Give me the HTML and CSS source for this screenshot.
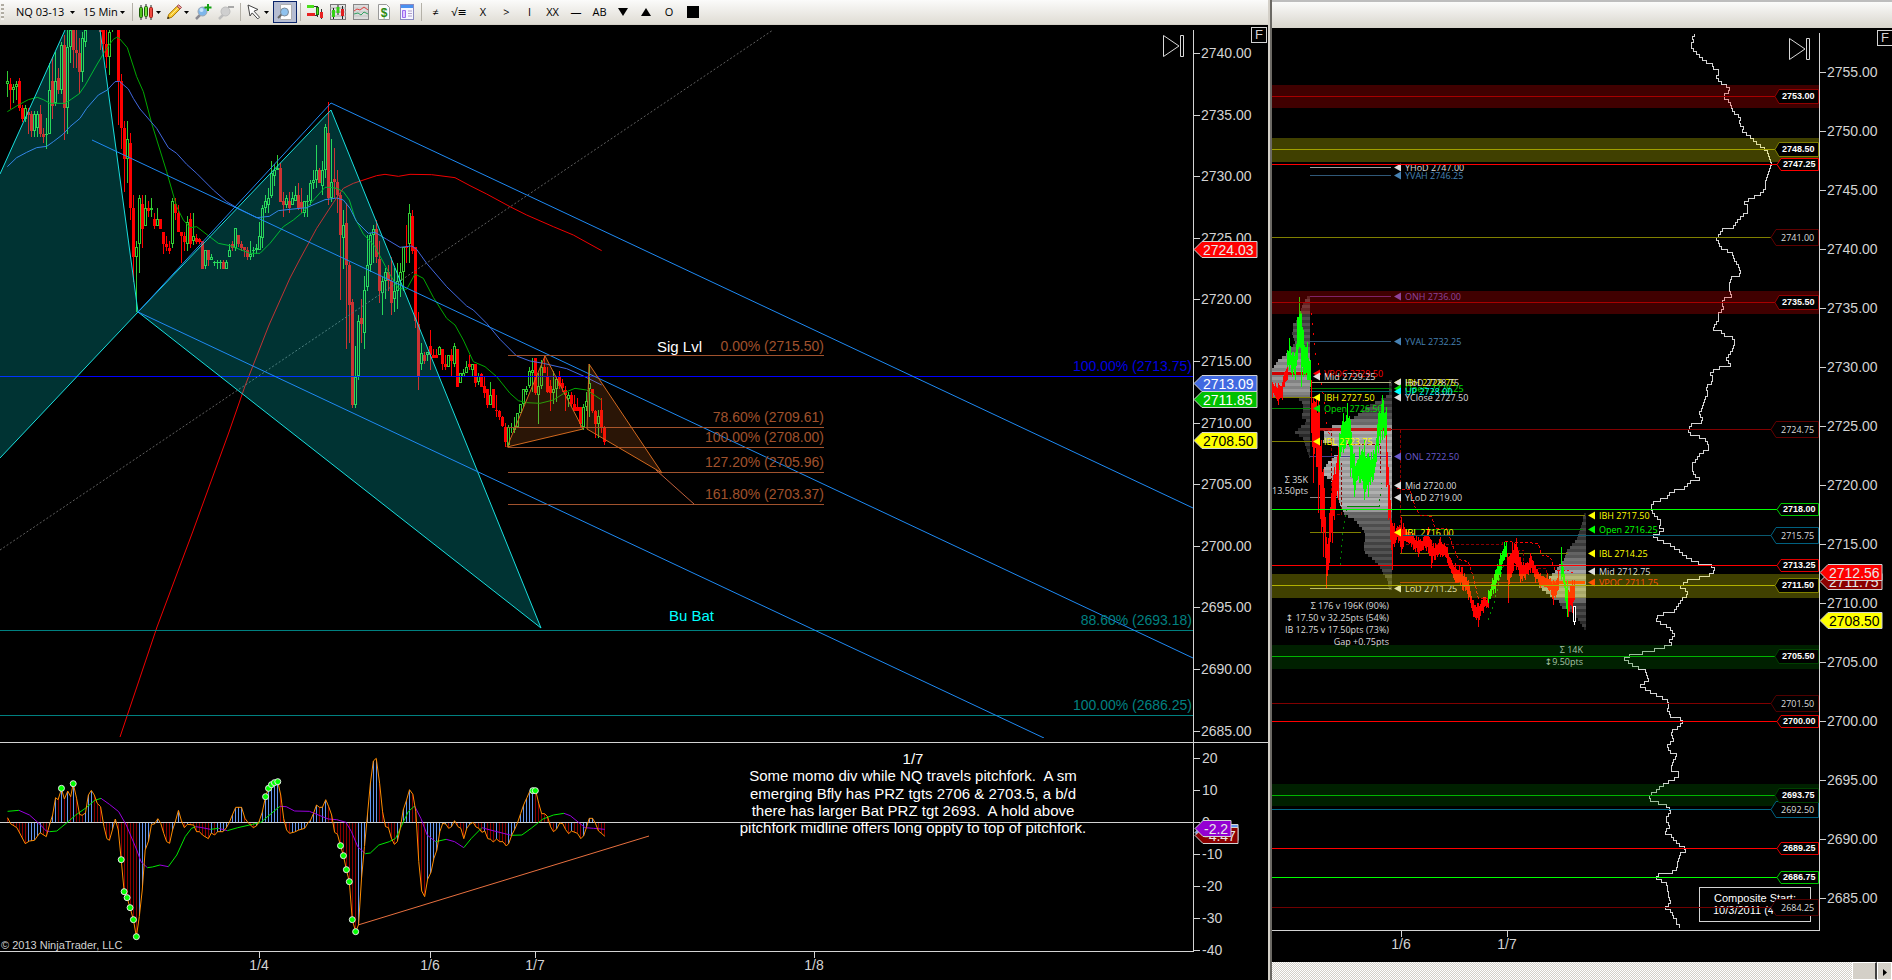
FILE: index.html
```html
<!DOCTYPE html>
<html lang="en">
<head>
<meta charset="utf-8">
<title>NQ 03-13 - 15 Min</title>
<link rel="stylesheet" href="styles.css">
</head>
<body>
<main class="workspace">
  <section class="window" aria-label="NQ 15 minute chart">
    <div class="toolbar" role="toolbar" aria-label="Chart tools">
      <span class="grip"></span>
      <label class="combo combo-instrument"><select aria-label="Instrument"><option>NQ 03-13</option></select><svg class="caret" viewBox="0 0 5 3"><path d="M0 0h5L2.500 3z"/></svg></label>
      <label class="combo combo-period"><select aria-label="Period"><option>15 Min</option></select><svg class="caret" viewBox="0 0 5 3"><path d="M0 0h5L2.500 3z"/></svg></label>
      <span class="sep"></span>
      <button class="tool tool-menu" aria-label="Chart style">
        <svg class="icon" viewBox="0 0 16 16"><path d="M3 1v15M8 0v15M13 1v15" stroke="#222"/><rect x="1.500" y="3.500" width="3" height="10" rx="1" fill="#4ec21a" stroke="#1d5c0a"/><rect x="6.500" y="2.500" width="3" height="10" rx="1" fill="#6fe03a" stroke="#1d5c0a"/><rect x="11.500" y="3.500" width="3" height="10" rx="1" fill="#f04a40" stroke="#a01a14"/></svg>
        <svg class="caret" viewBox="0 0 5 3"><path d="M0 0h5L2.500 3z"/></svg>
      </button>
      <button class="tool tool-menu" aria-label="Drawing tools">
        <svg class="icon" viewBox="0 0 16 16"><path d="M1.500 14.500l1.200-4L11 2.200l3 2.800-8.200 8.300z" fill="#f8c830" stroke="#a87808"/><path d="M11 2.200L12.600.8l3 2.600L14 5z" fill="#f0a0a0" stroke="#a05050"/><path d="M1.200 15l.8-2.500 1.600 1.700z" fill="#222"/><path d="M4.500 11.500L12 4" stroke="#fff08a"/></svg>
        <svg class="caret" viewBox="0 0 5 3"><path d="M0 0h5L2.500 3z"/></svg>
      </button>
      <button class="tool" aria-label="Zoom in">
        <svg class="icon" viewBox="0 0 16 16"><path d="M1 15l4.500-4.500" stroke="#8b8b93" stroke-width="2.500"/><circle cx="7.500" cy="7.500" r="4.500" fill="#7db6ea" stroke="#9aa6b2"/><circle cx="6.500" cy="6" r="2" fill="#c8e4fa"/><path d="M13 0v7M9.500 3.500h7" stroke="#12a012" stroke-width="2"/></svg>
      </button>
      <button class="tool" aria-label="Zoom out" disabled>
        <svg class="icon" viewBox="0 0 16 16"><path d="M1 15l4.500-4.500" stroke="#bdbdbd" stroke-width="2.500"/><circle cx="7.500" cy="7.500" r="4.500" fill="#cfcfcf" stroke="#bdbdbd"/><path d="M10 3h6" stroke="#a8a8a8" stroke-width="2"/></svg>
      </button>
      <span class="sep"></span>
      <button class="tool tool-menu" aria-label="Cursor">
        <svg class="icon" viewBox="0 0 16 16"><path d="M2 1l10 4.500-4 1.700 5.500 6-1.700 1.700-5.600-6L4 12z" fill="#fff" stroke="#444"/></svg>
        <svg class="caret" viewBox="0 0 5 3"><path d="M0 0h5L2.500 3z"/></svg>
      </button>
      <button class="tool tool-active" aria-label="Data box" aria-pressed="true">
        <svg class="icon" viewBox="0 0 16 16"><path d="M3.500.5h11v15h-11z" fill="#fdfdfd" stroke="#b0b0b0"/><path d="M1 14l4-4" stroke="#666" stroke-width="2"/><circle cx="7.500" cy="8" r="4" fill="#8fc2ee" stroke="#7f8c98"/></svg>
      </button>
      <span class="sep"></span>
      <button class="tool" aria-label="Chart trader">
        <svg class="icon" viewBox="0 0 16 16"><path d="M6 2.500h4M7 11.500h3M10.500 2v11M14.500 5v10" stroke="#333"/><rect x="0" y="1" width="7" height="3" fill="#4be01a"/><rect x="9.500" y="3.500" width="2" height="7" fill="#4be01a" stroke="#1d7c0a"/><rect x="0" y="9" width="8" height="3" fill="#e82020"/><rect x="13" y="8" width="3" height="6" fill="#e82020"/></svg>
      </button>
      <button class="tool" aria-label="Data series">
        <svg class="icon" viewBox="0 0 16 16"><rect x=".5" y=".5" width="15" height="15" fill="#e4e4e4" stroke="#777"/><path d="M0 4h16M0 8h16M0 12h16" stroke="#aaa"/><path d="M3.500 4v11M8 1v10M12.500 2v13" stroke="#222"/><path d="M2 6h3v7H2zM6.500 3h3v6h-3z" fill="#35d015"/><path d="M11 5h3v7h-3z" fill="#e02020"/></svg>
      </button>
      <button class="tool" aria-label="Indicators">
        <svg class="icon" viewBox="0 0 16 16"><rect x=".5" y=".5" width="15" height="15" fill="#dcdcdc" stroke="#888"/><path d="M1 4h14M1 8h14M1 12h14" stroke="#c4c4c4"/><path d="M1 7l3-2 3 1 4-3 4 3" fill="none" stroke="#e04040"/><path d="M1 10l4-1 3 2 3-3 4 2" fill="none" stroke="#30a060"/></svg>
      </button>
      <button class="tool" aria-label="Strategies">
        <svg class="icon" viewBox="0 0 16 16"><path d="M2.500.5h8l3 3v12h-11z" fill="#fbfbfb" stroke="#999"/><text class="dollar" x="8" y="13" text-anchor="middle">$</text></svg>
      </button>
      <button class="tool" aria-label="Properties">
        <svg class="icon" viewBox="0 0 16 16"><rect x="1.500" y=".5" width="13" height="15" fill="#f6f6ff" stroke="#8a8ac0"/><path d="M2 1h12v3H2z" fill="#4a90f0"/><path d="M3.500 6.500h3v7h-3z" fill="#e0c8ff" stroke="#9a6af0"/><path d="M9 7h4M9 9.500h4M9 12h4" stroke="#b0a0c8"/></svg>
      </button>
      <span class="sep"></span>
      <button class="tool text-tool">≠</button>
      <button class="tool text-tool wide">√≡</button>
      <button class="tool text-tool wide">X</button>
      <button class="tool text-tool">&gt;</button>
      <button class="tool text-tool">I</button>
      <button class="tool text-tool">XX</button>
      <button class="tool text-tool wide">—</button>
      <button class="tool text-tool">AB</button>
      <button class="tool text-tool" aria-label="Triangle down"><svg class="shape" viewBox="0 0 10 10"><path d="M0 1h10L5 9z"/></svg></button>
      <button class="tool text-tool" aria-label="Triangle up"><svg class="shape" viewBox="0 0 10 10"><path d="M0 9h10L5 1z"/></svg></button>
      <button class="tool text-tool wide">O</button>
      <button class="tool text-tool" aria-label="Square"><svg class="shape square" viewBox="0 0 12 12"><path d="M0 0h12v12H0z"/></svg></button>
    </div>
    <div class="chart-area">
      <svg class="chart" id="main-chart" viewBox="0 25 1268 955" preserveAspectRatio="xMinYMin meet"></svg>
      <button class="forward" aria-label="Go to last bar"><svg viewBox="0 0 21 22"><path d="M.5.5v21L16 11zM17.500.5h3v21h-3z" fill="none" stroke="#d8d8d8"/></svg></button>
      <button class="fixed-scale">F</button>
    </div>
  </section>
  <div class="divider"></div>
  <section class="window" aria-label="NQ composite profile chart">
    <div class="toolbar-empty"></div>
    <div class="chart-area">
      <svg class="chart" id="profile-chart" viewBox="1272 28 620 934" preserveAspectRatio="xMinYMin meet"></svg>
      <button class="forward forward-profile" aria-label="Go to last bar"><svg viewBox="0 0 21 22"><path d="M.5.5v21L16 11zM17.500.5h3v21h-3z" fill="none" stroke="#d8d8d8"/></svg></button>
      <button class="fixed-scale fixed-scale-profile">F</button>
    </div>
    <div class="scrollbar">
      <span class="track"></span>
      <span class="thumb"></span>
      <button class="scroll-button" aria-label="Scroll right"><svg viewBox="0 0 4 7"><path d="M0 0v7L4 3.500z"/></svg></button>
    </div>
  </section>
</main>
<script src="chart.js"></script>
</body>
</html>
```

FILE: styles.css
```css
* { box-sizing: border-box; }

html, body { height: 100%; }

body {
  margin: 0;
  background: #000;
  color: #d3d3d3;
  font-family: "Liberation Sans", Arial, sans-serif;
  overflow: hidden;
}

.workspace {
  display: grid;
  grid-template-columns: 1268fr 4px 620fr;
  height: 100vh;
}

.window {
  display: flex;
  flex-direction: column;
  min-width: 0;
  min-height: 0;
  overflow: hidden;
}

.divider {
  background: #d4d0c8;
  border-right: 2px solid #6b6964;
}

.toolbar {
  display: flex;
  align-items: center;
  flex: none;
  height: 25px;
  background: linear-gradient(#fbfbfa, #dfdcd4);
  border-bottom: 1px solid #d4d0c8;
}

.toolbar-empty {
  flex: none;
  height: 28px;
  border-top: 2px solid #bdbdbd;
  background: linear-gradient(#fbfbfa, #d8d5cc);
}

.grip {
  width: 3px;
  height: 16px;
  margin: 0 8px 0 1px;
  background: repeating-linear-gradient(#b0aca2 0 2px, #f4f3f0 2px 4px);
}

.sep {
  width: 1px;
  height: 18px;
  margin: 0 2px 0 3px;
  background: #b4b1a8;
}

.combo {
  display: flex;
  align-items: center;
  padding-left: 4px;
}

.combo-instrument { width: 67px; }
.combo-period { width: 50px; }

.combo select {
  flex: 1;
  min-width: 0;
  padding: 0;
  border: 0;
  appearance: none;
  background: none;
  color: #000;
  font: 11px/16px "Open Sans", sans-serif;
}

.caret { width: 5px; height: 3px; margin-right: 4px; flex: none; }

.tool {
  display: flex;
  align-items: center;
  justify-content: center;
  flex: none;
  width: 23px;
  height: 22px;
  padding: 0;
  border: 0;
  background: none;
  color: #000;
  font: 11px/16px "Open Sans", "DejaVu Sans", sans-serif;
}

.tool-menu { width: 28px; gap: 2px; }
.tool-menu .caret { margin: 0; }

.tool-active {
  width: 24px;
  margin: 0 0 0 2px;
  border: 1px solid #0a246a;
  background: #b6bdd2;
}

.wide { width: 24px; }
.icon { width: 16px; height: 16px; flex: none; fill: none; overflow: visible; }
.dollar { fill: #2a8a10; font: bold 12px "Liberation Sans", sans-serif; }
.shape { width: 10px; height: 10px; }
.square { width: 12px; height: 12px; }

.chart-area { position: relative; flex: 1; min-height: 0; }
.chart { display: block; width: 100%; height: 100%; }

.fixed-scale {
  position: absolute;
  top: 2px;
  right: 1px;
  width: 16px;
  height: 16px;
  padding: 0;
  border: 1px solid #d3d3d3;
  background: #000;
  color: #d3d3d3;
  font: 13px/14px "Liberation Sans", Arial, sans-serif;
}

.fixed-scale-profile { right: -1px; }

.forward {
  position: absolute;
  top: 10px;
  right: 84px;
  width: 21px;
  height: 22px;
  padding: 0;
  border: 0;
  background: none;
}

.forward svg { display: block; width: 21px; height: 22px; }
.forward-profile { right: 82px; }

.scrollbar { display: flex; flex: none; height: 18px; }

.track {
  flex: 1;
  background: repeating-conic-gradient(#d4d0c8 0 25%, #fff 0 50%) 0 0 / 2px 2px;
}

.thumb {
  width: 25px;
  background: #d4d0c8;
  border: 1px solid #fff;
  border-right: 2px solid #404040;
}

.scroll-button {
  width: 15px;
  padding: 0;
  border: 1px solid #fff;
  background: #d4d0c8;
}

.scroll-button svg { width: 4px; height: 7px; }

svg .crisp { shape-rendering: crispEdges; }
svg .smooth { shape-rendering: auto; }
svg text { white-space: pre; }

.axis-text { font: 14px "Liberation Sans", Arial, sans-serif; fill: #d3d3d3; }
.note-text { font: 15px "Liberation Sans", Arial, sans-serif; fill: #fff; }
.copyright { font: 11px "Liberation Sans", Arial, sans-serif; fill: #d3d3d3; }
.small-text { font: 9px "Open Sans", "Noto Sans", "DejaVu Sans", sans-serif; }
.tag-text { font: 9px "Open Sans", "Noto Sans", sans-serif; fill: #dcdcdc; }
.tag-strong { font: bold 9px "Liberation Sans", Arial, sans-serif; fill: #fff; }
.box-text { font: 11px "Liberation Sans", Arial, sans-serif; fill: #fff; }
```

FILE: chart.js
```js
const NS = 'http://www.w3.org/2000/svg';

function add(parent, name, attrs, text) {
  const el = document.createElementNS(NS, name);
  for (const key in attrs) el.setAttribute(key, attrs[key]);
  if (text !== undefined) el.textContent = text;
  parent.appendChild(el);
  return el;
}

function line(g, x1, y1, x2, y2, stroke, extra) {
  return add(g, 'line', Object.assign({ x1, y1, x2, y2, stroke }, extra));
}

function poly(g, pts, stroke, extra) {
  return add(g, 'polyline', Object.assign({ points: pts.map(p => p.join(',')).join(' '), stroke, fill: 'none' }, extra));
}

function label(g, x, y, text, fill, cls, anchor) {
  const attrs = { x, y, class: cls || 'axis-text', 'text-anchor': anchor || 'start' };
  if (fill) attrs.style = 'fill:' + fill;
  return add(g, 'text', attrs, text);
}

function pairs(s) {
  return s.trim().split(/\s+/).map(p => p.split(',').map(Number));
}

function scaled(s, ox, oy, kx, ky) {
  return pairs(s).map(p => [ox + p[0] / kx, oy + p[1] / (ky || kx)]);
}

function valueAt(pts, x) {
  for (let i = 1; i < pts.length; i++) {
    if (x <= pts[i][0]) {
      const a = pts[i - 1], b = pts[i];
      const t = (x - a[0]) / (b[0] - a[0] || 1);
      return a.slice(1).map((v, k) => v + t * (b[k + 1] - v));
    }
  }
  return pts[pts.length - 1].slice(1);
}

function priceTag(g, x, y, width, text, fill, color) {
  const t = y - 8, b = y + 8;
  add(g, 'path', { d: `M${x} ${y}L${x + 8} ${t}H${x + width}V${b}H${x + 8}Z`, fill, stroke: '#d3d3d3' });
  if (text) label(g, x + 9, y + 5, text, color || '#e8e8e8');
}

const SMOOTH = { class: 'smooth' };

/* ---------- main chart ---------- */
(function () {
  const svg = document.getElementById('main-chart');
  const defs = add(svg, 'defs', {});
  const clip = add(defs, 'clipPath', { id: 'price-panel' });
  add(clip, 'rect', { x: 0, y: 30, width: 1193, height: 708 });
  const plot = add(svg, 'g', { class: 'crisp', 'clip-path': 'url(#price-panel)' });

  /* high, body top, body bottom, low, direction; three units per pixel */
  const early = `138,169,178,215,g 160,178,196,252,r 178,187,196,233,g 169,178,187,224,g 160,169,250,258,r 240,250,282,290,r
    240,250,282,290,g 250,262,270,326,r 258,268,317,335,r 258,268,317,335,g 258,268,308,335,g 240,268,326,335,r 308,326,335,353,r
    278,326,326,371,g 115,196,326,326,g 95,169,242,282,r 82,169,233,242,g 130,160,196,206,r 50,60,196,206,g 30,60,250,345,r
    15,67,250,326,g 0,15,67,115,g 0,0,76,130,r 0,76,85,130,r 40,85,140,206,r 20,40,140,170,g 0,15,50,67,g 0,0,12,15,r
    0,0,12,15,g 0,0,12,15,r 0,0,12,15,r 0,0,20,76,r 0,15,58,85,r 0,58,95,130,r 0,20,95,150,g 0,0,15,20,g 0,0,10,12,r
    0,0,169,300,r 148,169,308,371,r 289,308,402,500,r 289,342,402,473,g 324,353,548,585,r 510,548,695,770,r 648,667,695,862,g
    510,520,658,743,g 510,538,611,668,r 510,548,602,602,g 528,548,558,575,r 519,548,556,575,g 565,583,602,611,r 548,583,602,602,g
    583,583,611,611,r 622,622,658,686,r 632,658,667,677,r 648,668,677,686,r 520,528,658,668,g 519,538,565,585,r 540,565,622,622,r
    622,622,632,713,r 622,632,650,677,r 573,592,658,677,g 563,583,658,668,r 563,632,648,660,g 628,640,650,658,r 640,641,650,658,r
    648,648,731,731,r 676,676,722,731,g 676,676,704,722,r 686,695,704,704,g 708,712,712,722,g 704,712,712,731,g 704,712,712,731,g
    704,712,731,731,r 704,712,731,731,g 656,676,695,695,g 648,656,668,677,r 610,610,668,677,g 630,630,658,667,r 648,658,668,677,r
    667,667,676,695,r 667,676,695,704,r 648,686,695,704,g 667,676,676,695,g 658,668,676,686,g 592,632,676,676,g 540,548,640,668,g
    510,529,548,565,g 490,520,540,565,g 408,445,512,520,g 418,436,454,484,g 390,428,436,436,g 415,428,530,530,r 500,529,539,575,r
    510,520,539,548,g 500,529,548,565,r 500,520,539,539,g 482,510,529,529,g 473,510,548,556,r 490,530,548,565,r 529,529,565,575,g
    510,529,530,575,g 464,473,529,539,g 436,464,473,492,g 361,436,464,490,g 428,436,473,473,r 408,436,482,510,g 298,306,436,460,g
    232,324,520,540,r`;
  const middle = `178,306,354,365,g 204,298,306,354,r 270,306,346,400,r 335,346,466,660,r 390,436,475,566,g 370,428,556,808,r
    545,556,676,790,r 658,667,974,983,r 798,890,974,983,g 706,724,888,900,g 658,714,732,790,r 588,630,760,808,g 466,556,622,632,g
    458,466,556,575,g 436,446,466,548,g 420,446,530,548,r 484,538,632,668,r 592,604,640,706,g 565,576,604,658,g 556,576,604,632,r
    530,604,668,706,r 565,632,658,697,g 548,604,632,688,g 548,576,604,650,g 500,502,576,632,g 436,502,502,548,r 373,400,493,548,g
    390,408,512,522,r 502,502,724,743,r 695,732,888,930,r 788,818,853,870,g 815,825,844,853,r 815,817,825,844,g 750,798,826,870,r
    808,826,835,835,r 808,825,835,835,r 798,800,826,826,g 808,808,853,870,r 826,853,862,870,r 825,826,862,862,g 808,825,844,888,r
    788,798,853,862,g 808,808,920,920,r 880,880,908,908,g 868,880,890,890,g 843,862,880,880,g 825,853,862,870,r 853,853,870,888,g
    853,853,908,920,r 880,888,906,915,g 880,882,920,920,r 890,918,940,955,r 928,928,974,983,r 906,946,974,974,g 928,928,983,983,r
    946,990,992,1010,r 990,992,1010,1020,r 1008,1010,1039,1041,r`;
  const late = `280,290,335,350,r 285,290,345,350,g 280,290,292,310,g 260,290,300,308,g 250,250,290,290,g 222,222,250,250,g
    178,178,222,232,g 168,178,185,195,g 110,122,168,175,g 84,120,130,185,g 84,84,188,195,r 130,168,196,282,g 90,112,168,178,g
    76,110,130,130,r 110,140,185,190,r 150,168,188,242,r 122,178,188,222,g 140,148,178,215,g 122,140,168,178,r 148,158,175,185,r
    168,180,196,242,r 185,196,206,232,g 185,196,222,232,r 196,222,242,242,r 205,232,242,242,r 232,232,282,290,r 222,232,290,300,g
    185,212,232,242,g 103,158,178,260,g 178,178,242,250,r 240,242,282,325,r 240,258,282,325,g 205,240,292,310,r 288,290,335,345,r`;
  let index = 0;
  function candles(text, oy) {
    text.trim().split(/\s+/).forEach(item => {
      const v = item.split(',');
      const [hi, top, bot, lo] = v.slice(0, 4).map(n => Math.round(oy + n / 3));
      const x = 6 + 3 * index++;
      const up = v[4] === 'g';
      const color = up ? '#32cd32' : '#ff0000';
      add(plot, 'rect', { x: x + 1, y: hi, width: 1, height: Math.max(1, lo - hi), fill: color });
      add(plot, 'rect', { x, y: top, width: 3, height: Math.max(1, bot - top), fill: color });
      if (up && bot - top > 2) add(plot, 'rect', { x: x + 1, y: top + 1, width: 1, height: bot - top - 2, fill: '#000' });
    });
  }
  candles(early, 25);
  candles(middle, 80);
  candles(late, 330);

  const green = scaled('22,260 55,240 85,224 112,217 130,224 150,235 195,235 215,222 238,206 256,180 290,120 320,70 340,43 350,37 358,40 382,68 410,155 430,200 455,295 500,440 530,545 550,585 570,608 590,605 625,632 655,655 690,662 750,685 780,685 810,655 850,605 880,585 910,560 945,520 975,487 990,487', 0, 25, 3)
    .concat(scaled('110,325 130,335 148,360 165,415 190,462 225,500 265,575 295,625 320,628 335,600 345,582 370,595 400,652 440,715 465,735 490,780 520,845 555,860 590,890 630,940 655,962 680,968 720,970 760,960 800,935 825,925 860,930 905,960', 300, 80, 3));
  const blue = scaled('22,425 50,398 80,382 110,368 140,364 160,350 190,327 210,305 240,280 260,250 295,210 322,195 345,170 358,169 385,192 400,220 420,252 470,310 505,368 530,385 560,418 590,445 640,495 680,530 710,548 770,578 808,574 835,557 870,553 920,548 975,524 990,522', 0, 25, 3)
    .concat(scaled('110,354 130,360 150,385 170,425 205,460 225,457 260,478 300,502 335,498 350,508 380,550 440,620 500,678 520,690 560,730 600,778 650,828 690,843 730,850 800,866 850,888 905,915', 300, 80, 3));
  const red = pairs('120,737 157,627 193,531 229,432 245,386 269,325 290,278 300,259')
    .concat(scaled('50,445 100,368 130,325 160,310 230,287 255,283 295,289 330,283 395,284 465,293 510,317 560,342 630,380 680,405 760,440 820,465 905,512', 300, 80, 3));
  poly(plot, green, '#00a800', SMOOTH);
  poly(plot, blue, '#4169e1', SMOOTH);
  poly(plot, red, '#f00000', SMOOTH);

  line(plot, 0, 550, 773, 30, '#606060', { 'stroke-dasharray': '2 2', class: 'smooth' });
  line(plot, 0, 376.5, 1193, 376.5, '#0000ff');
  line(plot, 0, 630.5, 1193, 630.5, '#008080');
  line(plot, 0, 715.5, 1193, 715.5, '#008080');

  const teal = 'rgba(0,255,255,0.2)';
  const edge = '#18dede';
  add(plot, 'polygon', { points: '0,174 65,30 100,30 138,312 0,458', fill: teal });
  add(plot, 'polygon', { points: '138,312 331,110 541,628', fill: teal, stroke: edge, class: 'smooth' });
  poly(plot, [[0, 174], [65, 30]], edge, SMOOTH);
  poly(plot, [[100, 30], [138, 312], [0, 458]], edge, SMOOTH);

  const fork = '#1e8af4';
  line(plot, 331, 103, 1193, 508, fork, SMOOTH);
  line(plot, 92, 140, 1193, 658, fork, SMOOTH);
  line(plot, 138, 312, 1044, 738, fork, SMOOTH);
  line(plot, 138, 312, 331, 103, fork, SMOOTH);

  [355, 427, 447, 472, 504].forEach(y => line(plot, 508, y + 0.5, 824, y + 0.5, '#a0522d'));
  const orange = { fill: 'rgba(210,105,30,0.2)', stroke: '#d2691e', class: 'smooth' };
  add(plot, 'polygon', Object.assign({ points: '507,447 545,356 583,429' }, orange));
  add(plot, 'polygon', Object.assign({ points: '589,364 662,473 587,429' }, orange));
  line(plot, 656, 470, 694, 504, '#c0603c', SMOOTH);

  [['0.00% (2715.50)', 351], ['78.60% (2709.61)', 422], ['100.00% (2708.00)', 442], ['127.20% (2705.96)', 467], ['161.80% (2703.37)', 499]]
    .forEach(t => label(svg, 824, t[1], t[0], '#a0522d', null, 'end'));
  label(svg, 1192, 371, '100.00% (2713.75)', '#0000e0', null, 'end');
  label(svg, 1192, 625, '88.60% (2693.18)', '#008080', null, 'end');
  label(svg, 1192, 710, '100.00% (2686.25)', '#008080', null, 'end');
  label(svg, 657, 352, 'Sig Lvl', '#fff', 'note-text');
  label(svg, 669, 621, 'Bu Bat', '#00ffff', 'note-text');

  /* momentum panel */
  const osc = add(svg, 'g', { class: 'crisp' });
  const K = 2.376;
  const momentum = scaled(`18,248 25,266 40,278 60,326 70,318 82,316 95,293 110,305 118,268 125,240 132,188 138,194 146,162 153,192 161,168 168,185 174,146 182,190 189,238 195,241 203,234 210,180 217,166 224,180 231,205 239,215 247,275 254,311 260,316 267,285 274,252 281,285 288,374 295,470 302,488 309,518 317,554 324,605 331,545 338,465 345,345 353,318 360,268 367,267 375,251 382,265 389,295 396,320 403,325 410,285 417,258 424,226 431,257 438,278 445,268 460,270 467,290 474,290 481,300 495,311 502,294 510,300 517,290 530,290 538,278 545,262 552,240 560,217 574,217 582,250 590,264 602,278 610,272 616,258 623,232 631,185 638,160 645,149 652,143 660,140 667,180 674,250 681,285 688,295 700,291 710,285 724,280 731,265 738,255 745,235 752,210 759,217 766,217 774,194 781,215 788,240 795,292 802,298 809,332 816,362 823,404 830,440 837,554 845,590 852,569 859,430 866,335 873,240 880,145 887,78 894,70 902,145 909,230 916,275 923,278 930,310 937,328 944,320 951,280 958,225 966,195 973,164 981,178 988,230 995,380 1002,468 1009,485 1016,433 1024,412 1031,370 1038,345 1045,290 1052,265 1059,267 1066,280 1073,275 1080,257 1088,275 1095,280 1102,311 1109,280 1116,268 1124,262 1131,276 1138,280 1145,292 1152,288 1159,311 1166,313 1172,321 1180,312 1187,320 1195,320 1203,333 1209,325 1216,300 1223,283 1230,262 1237,236 1244,210 1252,188 1259,168 1266,166 1273,168 1280,205 1287,236 1294,236 1301,245 1308,275 1315,290 1322,283 1330,264 1337,266 1344,284 1351,296 1358,288 1372,295 1380,311 1387,302 1394,275 1400,250 1408,250 1415,266 1422,288 1430,296 1437,304`, 0, 735, K, 3);
  for (let x = 7.5; x < 605; x += 3) {
    const y = valueAt(momentum, x)[0];
    const rising = y <= valueAt(momentum, x - 3)[0];
    line(osc, x, 822.5, x, y, rising ? '#6495ed' : '#8b0000');
  }
  line(osc, 0, 822.5, 1193, 822.5, '#d3d3d3');
  const average = scaled('18,229 45,226 70,240 95,268 110,288 118,290 135,288 160,262 180,240 205,218 225,196 240,190 260,208 282,230 300,270 325,345 335,380 350,398 362,396 380,390 400,395 420,360 440,305 455,280 465,275 480,278 500,283 520,280 540,287 565,278 600,268 620,262 645,235 665,214 680,215 700,228 735,229 780,252 800,254 822,262 835,290 850,335 868,356 880,354 900,330 925,320 940,310 955,270 970,230 985,213 1000,250 1015,300 1035,320 1060,313 1080,320 1102,338 1120,310 1145,278 1165,285 1215,301 1240,300 1262,280 1290,252 1315,240 1340,235 1355,242 1390,278 1410,280 1437,283', 0, 735, K, 3);
  for (let i = 1; i < average.length; i++) {
    const up = average[i][1] <= average[i - 1][1];
    poly(osc, [average[i - 1], average[i]], up ? '#00e800' : '#9a00e0', SMOOTH);
  }
  poly(osc, momentum, '#ff8c00', SMOOTH);
  line(osc, 358, 925, 649, 836, '#e8703f', SMOOTH);
  scaled('146,160 174,146 288,374 295,470 302,488 309,518 317,554 324,605 631,185 638,160 645,149 652,143 660,140 809,332 816,362 823,404 830,440 837,554 845,590 1266,167 1272,167', 0, 735, K, 3)
    .forEach(p => add(svg, 'circle', { cx: p[0], cy: p[1], r: 3, fill: '#00ff00', stroke: '#e8e8e8' }));

  /* axes */
  const axis = add(svg, 'g', { class: 'crisp' });
  line(axis, 1193.5, 30, 1193.5, 952, '#d3d3d3');
  line(axis, 0, 742.5, 1268, 742.5, '#d3d3d3');
  line(axis, 0, 951.5, 1194, 951.5, '#d3d3d3');
  for (let i = 0; i < 12; i++) {
    const y = Math.round(53 + i * 61.6);
    line(axis, 1194, y + 0.5, 1200, y + 0.5, '#d3d3d3');
    label(svg, 1201, y + 5, (2740 - 5 * i) + '.00');
  }
  [20, 10, 0, -10, -20, -30, -40].forEach((v, i) => {
    const y = 758 + 32 * i;
    line(axis, 1194, y + 0.5, 1200, y + 0.5, '#d3d3d3');
    label(svg, 1202, y + 5, String(v));
  });
  [[259, '1/4'], [430, '1/6'], [535, '1/7'], [814, '1/8']].forEach(t => {
    line(axis, t[0] + 0.5, 952, t[0] + 0.5, 958, '#d3d3d3');
    label(svg, t[0], 970, t[1], null, null, 'middle');
  });
  priceTag(svg, 1194, 249.5, 63, '2724.03', '#ff0000');
  priceTag(svg, 1194, 383.5, 63, '2713.09', '#4169e1', '#fff');
  priceTag(svg, 1194, 399.5, 63, '2711.85', '#00c000', '#fff');
  priceTag(svg, 1194, 440.5, 63, '2708.50', '#ffff00', '#000');
  priceTag(svg, 1195, 832.5, 43, '', '#6495ed');
  priceTag(svg, 1195, 835.5, 43, '-4.47', '#8b0000');
  priceTag(svg, 1195, 828.5, 36, '-2.2', '#9400d3');

  ['1/7', 'Some momo div while NQ travels pitchfork.  A sm', 'emerging Bfly has PRZ tgts 2706 & 2703.5, a b/d',
    'there has larger Bat PRZ tgt 2693.  A hold above', 'pitchfork midline offers long oppty to top of pitchfork.']
    .forEach((t, i) => label(svg, 913, 764 + Math.round(17.300 * i), t, null, 'note-text', 'middle'));
  label(svg, 1, 949, '© 2013 NinjaTrader, LLC', null, 'copyright');
})();

/* ---------- composite profile chart ---------- */
(function () {
  const svg = document.getElementById('profile-chart');
  const g = add(svg, 'g', { class: 'crisp' });
  const X = 1265, Y = 280;
  const local = s => scaled(s, X, Y, 3);

  /* volume profiles, one bar per price tick; shade runs along the height */
  function profile(rightEdge, edge, light) {
    const pts = pairs(edge).map(p => [p[1], p[0]]);
    const right = X + rightEdge / 3;
    let n = 0;
    for (let y = pts[0][0]; y < pts[pts.length - 1][0]; y += 9) {
      const left = X + valueAt(pts, y)[0] / 3;
      let shade = valueAt(light, y)[0] + (n++ % 2 ? 12 : -10);
      shade = Math.round(Math.max(20, shade));
      add(g, 'rect', { x: left, y: Y + y / 3, width: Math.max(1, right - left), height: 3, fill: `rgb(${shade},${shade},${shade})` });
    }
  }
  profile(136, '125,48 110,75 108,110 85,125 82,155 90,185 70,215 40,235 22,260 22,345 60,348 110,355 115,385 108,405 125,420 88,455 115,470 122,500 135,530', [[40, 55], [200, 85], [230, 140], [340, 140], [350, 65], [540, 40]]);
  profile(380, '372,300 372,340 345,355 310,375 285,395 240,425 180,440 175,480 225,500 225,510 200,530 180,555 172,575 200,600 215,640 225,670 240,700 270,715 300,755 297,810 340,850 368,900 372,930', [[300, 45], [400, 75], [430, 120], [440, 160], [680, 165], [700, 95], [930, 45]]);
  profile(962, '958,700 945,745 935,775 905,810 900,830 870,870 850,890 820,915 850,940 880,960 890,980 930,1000 945,1025 958,1045', [[700, 45], [800, 70], [840, 110], [870, 150], [940, 150], [970, 70], [1045, 45]]);

  /* session reference lines */
  [[167.5, '#a0a0a0'], [175.5, '#2f5878'], [296.5, '#54308c'], [341.5, '#2f5878'], [382.5, '#b0b080'], [388.5, '#008000'], [391.5, '#006868'],
    [456.5, '#483d8b'], [497.5, '#888'], [588.5, '#a0a080']].forEach(l => line(g, 1310, l[0], 1391, l[0], l[1]));
  line(g, 1310, 532.5, 1361, 532.5, '#808000');
  [[397.5, '#808000'], [408.5, '#008000'], [441.5, '#808000']].forEach(l => line(g, 1272, l[0], 1314, l[0], l[1]));
  line(g, 1400, 515.5, 1585, 515.5, '#808000');
  line(g, 1400, 529.5, 1583, 529.5, '#008000');
  line(g, 1400, 553.5, 1568, 553.5, '#808000');
  line(g, 1400, 582.5, 1585, 582.5, '#a01800');
  line(g, 1272, 373.5, 1310, 373.5, '#d00000', { 'stroke-width': 3 });
  line(g, 1320, 429.5, 1391, 429.5, '#c01818', { 'stroke-width': 3 });
  line(g, 1545, 582.5, 1585, 582.5, '#ff2800', { 'stroke-width': 3 });

  const dash = { 'stroke-dasharray': '3 2' };
  poly(g, local('165,450 200,450 200,700 230,705 230,550'), '#8b0000', dash);
  poly(g, local('230,493 345,493 345,580'), '#8b0000', dash);
  poly(g, local('407,450 407,793 712,793 712,780'), '#8b0000', dash);
  poly(g, local('740,810 775,810 775,865 845,865 845,905'), '#8b0000', dash);
  const dots = { 'stroke-dasharray': '2 4' };
  poly(g, local('140,100 145,150 152,220 160,250 170,310 180,380 185,430 200,490'), '#ff0000', { 'stroke-dasharray': '2 8' });
  poly(g, local('395,625 435,630 450,680 465,705 500,710 510,745 545,745 560,790 580,838 610,845 625,890 640,955 670,957'), '#e00000', dash);
  poly(g, local('720,785 820,790 830,825 855,830 870,870 905,870 925,880'), '#ff0000', dash);
  poly(g, local('225,855 235,750 246,680 342,680 350,610'), '#008000', dots);
  poly(g, local('246,680 342,680'), '#008000');
  poly(g, local('670,1020 690,960 705,890 718,850'), '#009000', dots);

  /* price bars given as x, top, bottom envelopes */
  let seed = 7;
  const random = () => (seed = (seed * 16807) % 2147483647) / 2147483647;
  function bars(color, text) {
    const pts = pairs(text);
    for (let x = pts[0][0]; x <= pts[pts.length - 1][0]; x += 3) {
      const [top, bottom] = valueAt(pts, x);
      const span = bottom - top;
      add(g, 'rect', {
        x: Math.round(X + x / 3), y: Y + (top + random() * span * 0.3) / 3,
        width: 1, height: Math.max(3, span * (0.6 + random() * 0.1) / 3), fill: color
      });
    }
    pts.forEach(p => add(g, 'rect', { x: Math.round(X + p[0] / 3), y: Y + p[1] / 3, width: 1, height: (p[2] - p[1]) / 3, fill: color }));
  }
  const R = '#ff0000', L = '#00ff00';
  bars(R, '22,305,355 30,310,350 38,310,375 50,305,360 58,275,320 66,245,300');
  bars(L, '66,210,260 73,175,270 80,215,290 90,215,300 96,110,240 103,50,200 108,100,320 115,150,290 125,185,300 135,240,320');
  bars(R, '137,300,460 145,360,610 152,350,560 160,345,700 168,480,760 175,600,830 184,770,925 192,700,850 200,600,790 208,560,720 218,500,660');
  bars(L, '222,460,570 235,400,520 247,370,480 256,420,590 267,520,650 275,540,600 283,500,610 296,480,660 310,520,650 325,510,600 340,400,520 352,345,480 362,380,480');
  bars(R, '364,465,620 370,560,720 376,660,780 380,730,870 386,730,800 400,740,790 409,710,820 415,730,800 430,750,790 445,760,810 460,770,830 475,770,810 488,740,820 497,780,865 510,790,840 525,770,830 545,800,850 570,850,910 590,860,930 610,900,960 625,960,1010 640,970,1040 655,950,1000 668,950,985');
  bars(L, '670,930,970 690,870,940 705,820,890 718,785,840 723,785,830');
  bars(R, '725,820,900 730,830,970 740,790,880 752,775,870 765,830,910 780,850,900 795,820,880 810,860,910 825,880,925 845,880,925 865,900,975 880,870,930');
  bars(L, '888,800,900 893,860,910 905,900,1010');
  bars(R, '910,930,1010 920,900,1000 927,900,960');
  add(g, 'rect', { x: 1573.5, y: 606.5, width: 2, height: 15, fill: '#000', stroke: '#fff' });
  line(g, 1574.5, 621, 1574.5, 625, '#fff');

  /* pointers with level names */
  function pointer(x, y, text, color) {
    add(svg, 'path', { d: `M${x} ${y + 0.5}l7-4v8z`, fill: color });
    label(svg, x + 11, y + 4, text, color, 'small-text');
  }
  const W = '#dcdcdc';
  [[167, 'YHoD 2747.00', W], [175, 'YVAH 2746.25', '#4682b4'], [296, 'ONH 2736.00', '#6a5acd'], [341, 'YVAL 2732.25', '#4682b4'],
    [382, 'IBH 2728.75', '#ffff00'], [382, 'HoD 2728.75', W], [388, 'Open 2728.25', '#00e000'], [391, 'UP 2728.00', '#00ffff'],
    [397, 'YClose 2727.50', W], [456, 'ONL 2722.50', '#6a5acd'], [485, 'Mid 2720.00', W], [497, 'YLoD 2719.00', W],
    [532, 'IBL 2716.00', '#ffff00'], [588, 'LoD 2711.25', W]].forEach(m => pointer(1394, m[0], m[1], m[2]));
  [[373, 'VPOC 2729.50', '#ff0000'], [376, 'Mid 2729.25', W], [397, 'IBH 2727.50', '#ffff00'], [408, 'Open 2726.50', '#00e000'],
    [441, 'IBL 2723.75', '#ffff00']].forEach(m => pointer(1313, m[0], m[1], m[2]));
  [[515, 'IBH 2717.50', '#ffff00'], [529, 'Open 2716.25', '#00ff00'], [553, 'IBL 2714.25', '#ffff00'], [571, 'Mid 2712.75', W],
    [582, 'VPOC 2711.75', '#ff1800']].forEach(m => pointer(1588, m[0], m[1], m[2]));

  [['Σ 176 v 196K (90%)', 609], ['↕ 17.50 v 32.25pts (54%)', 621], ['IB 12.75 v 17.50pts (73%)', 633], ['Gap +0.75pts', 645]]
    .forEach(t => label(svg, 1389, t[1], t[0], W, 'small-text', 'end'));
  label(svg, 1308, 483, 'Σ 35K', W, 'small-text', 'end');
  label(svg, 1308, 494, '↕13.50pts', W, 'small-text', 'end');
  label(svg, 1583, 653, 'Σ 14K', W, 'small-text', 'end');
  label(svg, 1583, 665, '↕9.50pts', W, 'small-text', 'end');

  /* composite outline */
  const outline = scaled('343,100 335,112 343,122 329,130 340,145 352,160 370,178 397,190 402,205 417,210 408,228 418,240 432,250 448,262 444,274 425,284 440,294 450,305 456,325 466,338 480,348 475,365 488,380 487,391 505,403 520,418 540,433 560,448 568,470 572,490 565,510 557,530 553,565 545,575 525,585 495,600 492,608 503,615 500,635 482,645 470,662 455,680 425,685 415,700 409,712 415,728 428,745 455,752 460,770 472,790 480,808 478,823 452,828 445,850 449,878 460,882 435,887 425,905 430,920 412,940 418,952 402,970 397,982 420,990 432,1000 455,1008 464,1022 455,1045 440,1068 438,1080 458,1086 435,1098 410,1100 390,1115 396,1130 392,1150 378,1155 382,1180 372,1195 366,1215 358,1235 366,1255 362,1267 332,1270 323,1290 332,1300 355,1305 375,1315 385,1335 382,1345 360,1355 350,1372 337,1388 336,1405 345,1425 360,1435 330,1440 305,1465 272,1470 258,1490 230,1498', 1580, 0, 3)
    .concat(scaled('213,67 213,85 225,105 240,115 238,140 256,150 215,160 235,175 270,190 298,210 315,225 345,243 380,250 403,257 398,275 378,285 345,292 315,300 300,317 320,328 322,340 305,352 292,375 280,390 250,397 222,412 240,425 262,435 275,450 283,465 265,475 273,490 240,500 200,512 155,520 130,530 147,545 165,555 197,570 203,590 208,602 172,608 190,620 215,635 248,650 265,662 262,685 272,705 300,712 307,722 293,738 272,750 278,775 260,795 270,812 292,822 275,845 272,868 295,875 293,885 268,900 240,915 225,930 205,942 210,958 255,970 272,988 263,1005 255,1015 267,1035 250,1052 275,1065 285,1080 300,1095 322,1103 300,1118 292,1145 288,1168 265,1175 226,1182 228,1197 258,1200 264,1240 270,1265 255,1280 272,1290 280,1310 292,1320 285,1330 303,1335 290,1350', 1580, 480, 3))
    .map(p => [p[1], p[0]]);
  let d = 'M1694.500 33.500';
  for (let y = 36.5; y < 930; y += 3) d += `V${y}H${Math.round(valueAt(outline, y)[0]) + 0.5}`;
  add(g, 'path', { d, fill: 'none', stroke: '#d3d3d3' });

  add(g, 'rect', { x: 1699.5, y: 887.5, width: 111, height: 34, fill: 'none', stroke: '#d3d3d3' });
  label(svg, 1755, 902, 'Composite Start:', null, 'box-text', 'middle');
  label(svg, 1713, 914, '10/3/2011 (4', null, 'box-text');

  /* zones and price levels */
  const h = add(svg, 'g', { class: 'crisp' });
  [[85, 23, 'rgba(255,0,0,.25)'], [138, 24, 'rgba(255,255,0,.25)'], [291, 23, 'rgba(255,0,0,.25)'], [574, 24, 'rgba(255,255,0,.25)'],
    [645, 24, 'rgba(0,128,0,.25)'], [784, 22, 'rgba(0,128,0,.25)']]
    .forEach(b => add(h, 'rect', { x: 1272, y: b[0], width: 547, height: b[1], fill: b[2] }));

  const sizes = { big: [1771, 5, 8, 1781], mid: [1775, 4, 7, 1782], small: [1777, 4, 6, 1783] };
  [[237, '2741.00', 'big', '#808000', '#600000'], [429, '2724.75', 'big', '#800000', '#600000', 1391], [535, '2715.75', 'big', '#0a5a70', '#006080', 1403],
    [703, '2701.50', 'big', '#800000', '#500000'], [809, '2692.50', 'big', '#006888', '#006080'], [907, '2684.25', 'big', '#700000', '#500000'],
    [96, '2753.00', 'mid', '#a80000', '#900000'], [149, '2748.50', 'mid', '#a0a000', '#808000'], [302, '2735.50', 'mid', '#a80000', '#900000'],
    [585, '2711.50', 'mid', '#b0b000', '#808000'], [656, '2705.50', 'mid', '#00b400', '#004000'], [795, '2693.75', 'mid', '#00b400', '#004000'],
    [164, '2747.25', 'small', '#ff0000', '#ff0000'], [509, '2718.00', 'small', '#00ff00', '#00c800'], [565, '2713.25', 'small', '#ff0000', '#e00000'],
    [721, '2700.00', 'small', '#ff0000', '#e00000'], [848, '2689.25', 'small', '#ff0000', '#e00000'], [877, '2686.75', 'small', '#00ff00', '#00c800']]
    .forEach(([y, text, size, color, border, from]) => {
      const [tip, nose, half, tx] = sizes[size];
      line(h, from || 1272, y + 0.5, tip, y + 0.5, color);
      add(svg, 'path', { d: `M${tip} ${y + 0.5}l${nose} ${-half}H1818.500v${2 * half}H${tip + nose}z`, fill: '#000', stroke: border });
      label(svg, tx, size === 'big' ? y + 4 : y + 3, text, null, size === 'big' ? 'tag-text' : 'tag-strong');
    });

  /* axes */
  line(h, 1819.5, 33, 1819.5, 931, '#d3d3d3');
  line(h, 1272, 930.5, 1820, 930.5, '#d3d3d3');
  for (let i = 0; i < 15; i++) {
    const y = 72 + 59 * i;
    line(h, 1820, y + 0.5, 1826, y + 0.5, '#d3d3d3');
    label(svg, 1827, y + 5, (2755 - 5 * i) + '.00');
  }
  [[1401, '1/6'], [1507, '1/7']].forEach(t => {
    line(h, t[0] + 0.5, 931, t[0] + 0.5, 937, '#d3d3d3');
    label(svg, t[0], 949, t[1], null, null, 'middle');
  });
  priceTag(svg, 1820, 581.5, 62, '2711.75', '#8b0000');
  priceTag(svg, 1820, 572.5, 62, '2712.56', '#ff0000');
  priceTag(svg, 1820, 620.5, 62, '2708.50', '#ffff00', '#000');
})();
```
